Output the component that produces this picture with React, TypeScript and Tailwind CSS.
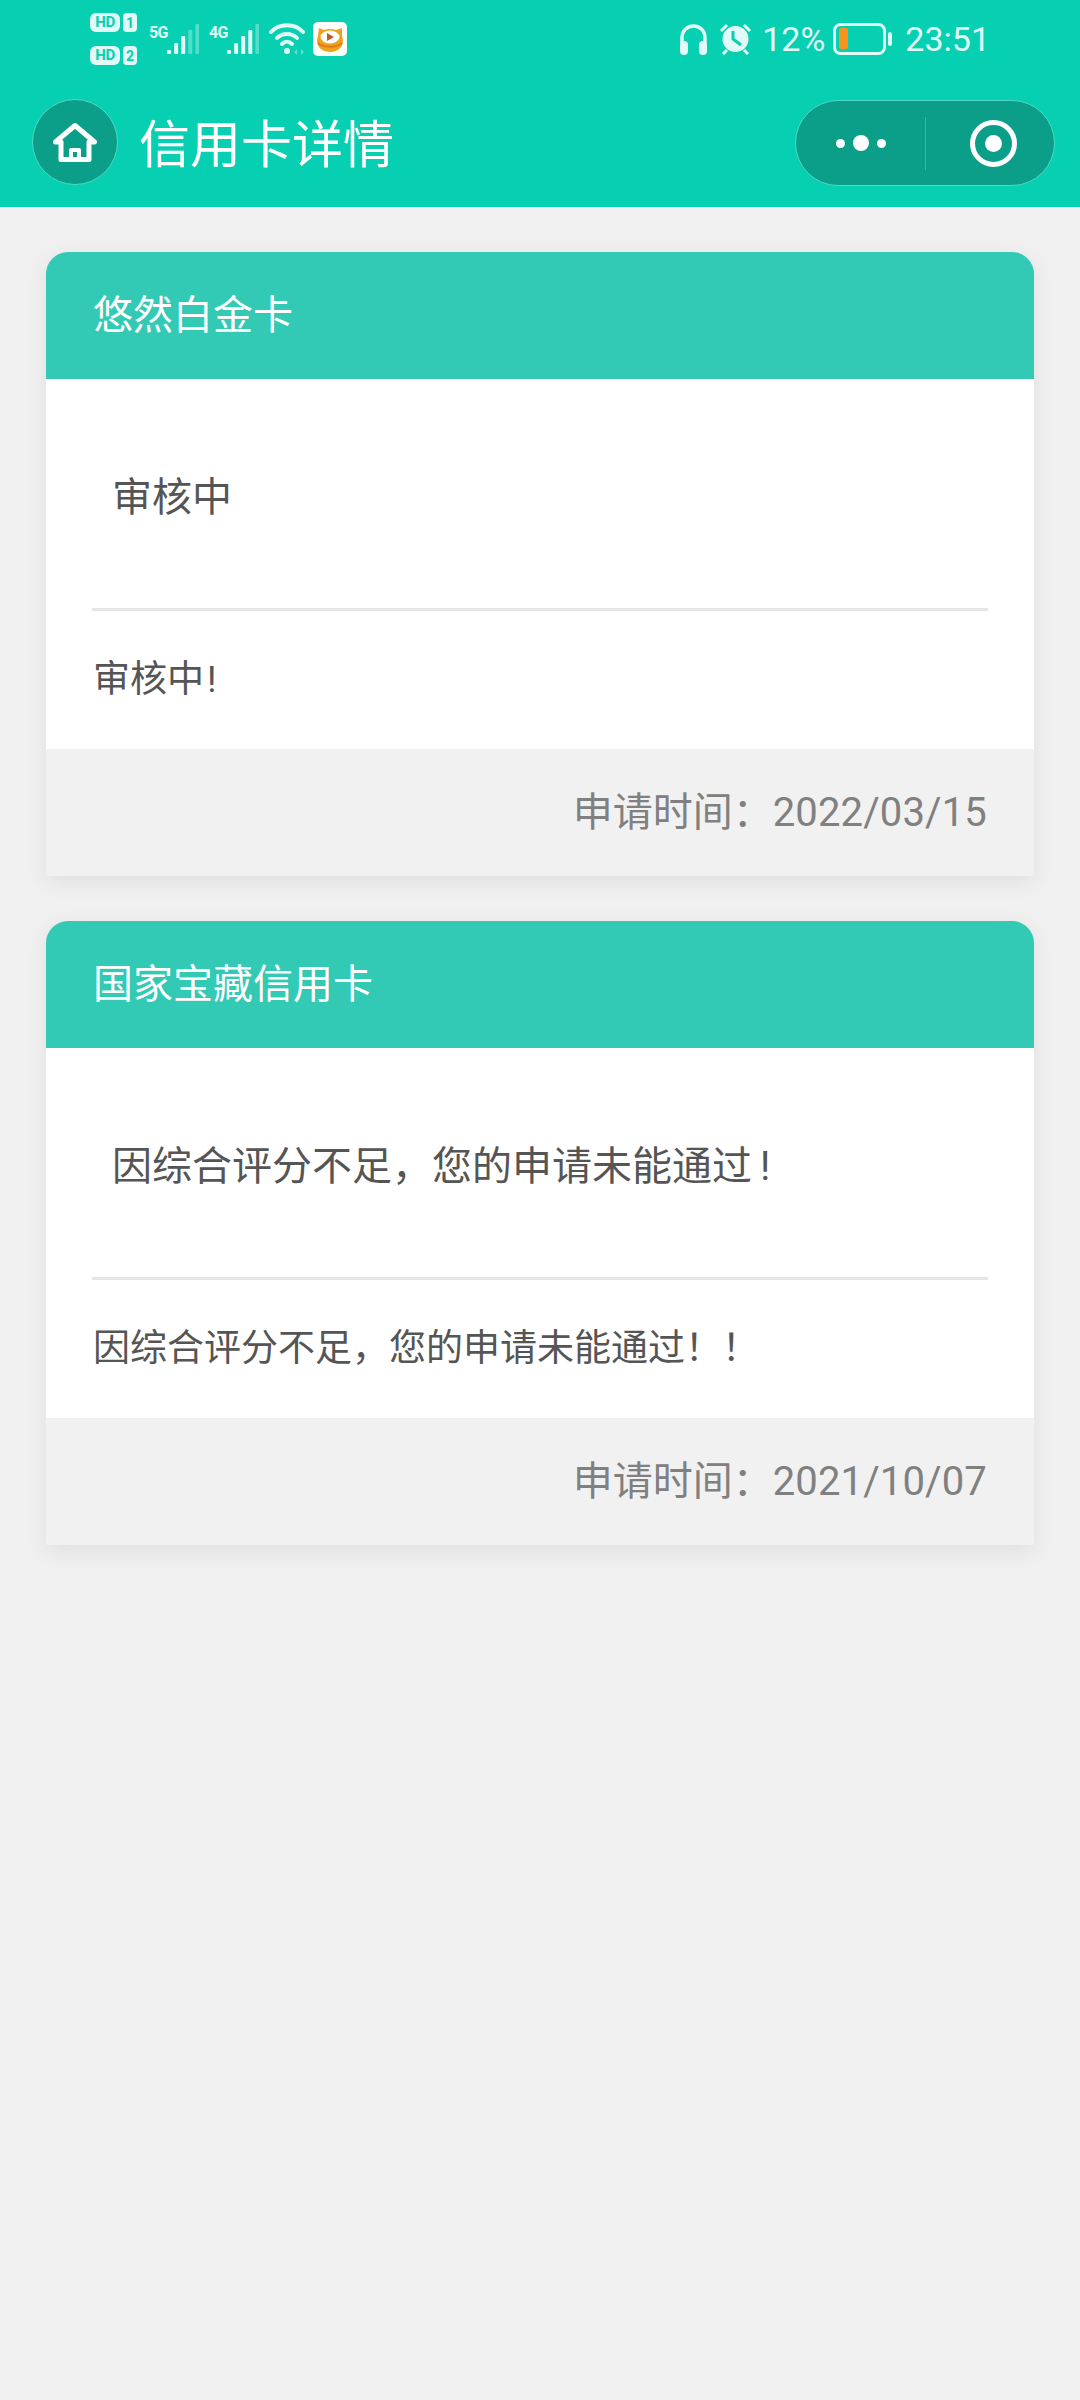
import type { ReactNode } from "react";

const font = { fontFamily: '"Roboto","Noto Sans CJK SC",sans-serif' };
const ink = "#e2faf6";

function Bars({ bright }: { bright: number }) {
  const tops = [26, 19, 12, 6, 0];
  return (
    <svg width="33" height="30" viewBox="0 0 33 30" fill={ink}>
      {tops.map((t, i) => (
        <rect key={i} x={1 + i * 7.1} y={t} width="4" height={30 - t} rx="1" opacity={i < bright ? 1 : 0.35} />
      ))}
    </svg>
  );
}

function Tag({ t }: { t: string }) {
  return (
    <div className="flex items-center gap-[3px]">
      <span className="flex h-[19px] w-[30px] items-center justify-center rounded-[6px] bg-[#e0faf5] text-[15px] leading-none font-bold tracking-[-0.5px] text-[#07cfb1]">HD</span>
      <span className="flex h-[19px] w-[14px] items-center justify-center rounded-[4px] bg-[#e0faf5] text-[14px] leading-none font-bold text-[#07cfb1]">{t}</span>
    </div>
  );
}

function Signal({ label, bright, cls }: { label: string; bright: number; cls: string }) {
  return (
    <div className={cls}>
      <div className="flex h-[30px] items-start">
        <span className="mt-[1px] w-[17px] text-[16px] leading-none font-bold tracking-[-0.8px] text-[#e2faf6]">{label}</span>
        <Bars bright={bright} />
      </div>
    </div>
  );
}

function Card({ name, status, msg, date }: { name: string; status: ReactNode; msg: ReactNode; date: string }) {
  return (
    <div className="w-[988px] rounded-t-[22px] shadow-[0_6px_22px_rgba(0,0,0,0.07)]">
      <div className="flex h-[127px] items-center rounded-t-[22px] bg-[#32c9b5] pl-[47px] text-[40px] text-white">{name}</div>
      <div className="bg-white px-[46px]">
        <div className="flex h-[232px] items-center border-b-[3px] border-[#e4e5e6] pt-[8px] pl-[20px] text-[40px] text-[#555555]">{status}</div>
        <div className="flex h-[138px] items-center pl-[1px] text-[37px] text-[#555555]">{msg}</div>
      </div>
      <div className="flex h-[127px] items-center justify-end bg-[#f1f1f1] pr-[47px] text-[40px] text-[#808080]">
        申请时间：<span className="tracking-[0.15px]">{date}</span>
      </div>
    </div>
  );
}

export default function App() {
  return (
    <div className="min-h-[2400px] w-[1080px] bg-[#f0f0f0]" style={font}>
      <div className="h-[207px] bg-[#07cfb1]">
        <div className="flex h-[78px] items-center justify-between pr-[90px] pl-[90px]">
          <div className="flex items-center">
            <div className="flex flex-col gap-[14px]">
              <Tag t="1" />
              <Tag t="2" />
            </div>
            <Signal label="5G" bright={3} cls="ml-[12px]" />
            <Signal label="4G" bright={4} cls="ml-[10px]" />
            <svg className="ml-[10px]" width="38" height="32" viewBox="0 0 38 32" fill="none" stroke="#e2faf6" strokeWidth="4" strokeLinecap="round">
              <path d="M2 9 C 10 0, 26 0, 34 9" />
              <path d="M8 15 C 13 9.500, 23 9.500, 28 15" />
              <path d="M13 21 C 16 18, 20 18, 23 21" />
              <circle cx="18" cy="28" r="3" fill="#e2faf6" stroke="none" />
              <path d="M28 26 L25 29 L28 32 Z M32 26 L35 29 L32 32 Z" fill="#e2faf6" stroke="none" opacity="0.4" />
            </svg>
            <svg className="ml-[6px]" width="34" height="34" viewBox="0 0 34 34">
              <rect width="34" height="34" rx="5" fill="#fff" />
              <path d="M6 6 L11 8 C15 6.500 19 6.500 23 8 L29 6 L29 14 C32 21 28 30 17 30 C6 30 2 21 5 14 Z" fill="#f0a21c" />
              <ellipse cx="17" cy="15" rx="9.500" ry="6.500" fill="#fff" />
              <path d="M14 11 L21 15 L14 19 Z" fill="#c9552a" />
              <path d="M5 21 C 10 26, 24 26, 29 21" stroke="#d9801a" strokeWidth="2" fill="none" />
            </svg>
          </div>
          <div className="flex items-center text-[#e2faf6]">
            <svg width="29" height="31" viewBox="0 0 29 31" fill="none">
              <path d="M3 19 V14 C3 -2 26 -2 26 14 V19" stroke="#e2faf6" strokeWidth="3.500" />
              <rect x="1" y="17" width="8" height="14" rx="4" fill="#e2faf6" />
              <rect x="20" y="17" width="8" height="14" rx="4" fill="#e2faf6" />
            </svg>
            <svg className="ml-[10px]" width="35" height="32" viewBox="0 0 35 32">
              <circle cx="17.500" cy="16" r="13" fill="#e2faf6" />
              <path d="M3 8 L9 2 M32 8 L26 2 M9 27 L5 31 M26 27 L30 31" stroke="#e2faf6" strokeWidth="3" />
              <path d="M15 8 V16 L23 22" stroke="#07cfb1" strokeWidth="3" fill="none" />
            </svg>
            <span className="ml-[9px] text-[34px] leading-none">12%</span>
            <svg className="ml-[8px]" width="59" height="32" viewBox="0 0 59 32" fill="none">
              <rect x="1.500" y="1.500" width="50" height="29" rx="6" stroke="#e2faf6" strokeWidth="3" />
              <rect x="6" y="5" width="9" height="21" rx="2" fill="#f7941d" />
              <rect x="55" y="9" width="4" height="14" rx="2" fill="#e2faf6" />
            </svg>
            <span className="ml-[13px] text-[34px] leading-none">23:51</span>
          </div>
        </div>
        <div className="flex items-start justify-between pt-[21px] pr-[25px] pl-[32px]">
          <div className="flex items-center">
            <div className="flex h-[86px] w-[86px] items-center justify-center rounded-full border border-[#4fd8c4] bg-[#0b9f8a]">
              <svg width="44" height="39" viewBox="0 0 44 39" fill="none" stroke="#fff" strokeWidth="5" strokeLinejoin="round" strokeLinecap="round">
                <path d="M2.500 19 L22 2.500 L41.500 19 H36 V36.500 H8 V19 Z" />
                <path d="M18 36 V27 H26 V36" strokeWidth="4" />
              </svg>
            </div>
            <div className="mt-[6px] ml-[21px] text-[51px] leading-none text-white">信用卡详情</div>
          </div>
          <div className="mt-[1px] flex h-[86px] w-[260px] items-center rounded-full border border-[#4fd8c4] bg-[#0b9f8a]">
            <div className="flex w-[129px] items-center justify-center gap-[8px]">
              <span className="h-[9px] w-[9px] rounded-full bg-white" />
              <span className="h-[16px] w-[16px] rounded-full bg-white" />
              <span className="h-[9px] w-[9px] rounded-full bg-white" />
            </div>
            <div className="h-[53px] w-px bg-[#3cb9a6]" />
            <div className="flex flex-1 items-center justify-center pl-[6px]">
              <div className="flex h-[47px] w-[47px] items-center justify-center rounded-full border-[5px] border-white">
                <span className="h-[17px] w-[17px] rounded-full bg-white" />
              </div>
            </div>
          </div>
        </div>
      </div>
      <div className="flex flex-col items-center gap-[45px] pt-[45px]">
        <Card name="悠然白金卡" status="审核中" msg={<>审核中<span className="pl-[3px]">!</span></>} date="2022/03/15" />
        <Card
          name="国家宝藏信用卡"
          status={<>因综合评分不足，您的申请未能通过<span className="pl-[8px]">!</span></>}
          msg="因综合评分不足，您的申请未能通过！！"
          date="2021/10/07"
        />
      </div>
    </div>
  );
}
